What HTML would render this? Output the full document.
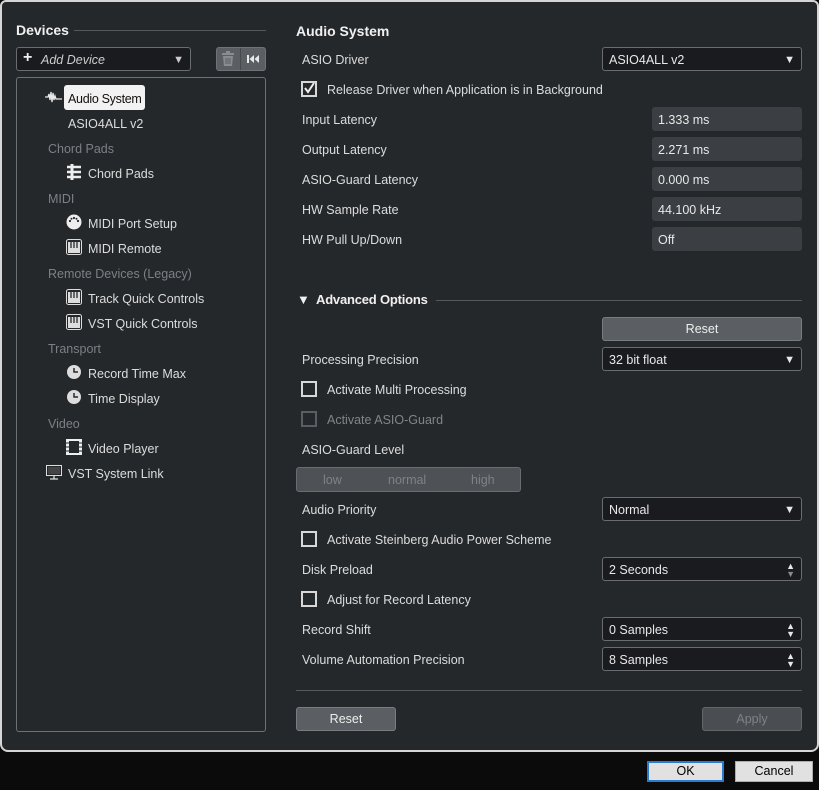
<!DOCTYPE html>
<html><head><meta charset="utf-8"><style>
*{box-sizing:border-box;margin:0;padding:0}
body{width:819px;height:790px;background:#0b0b0b;font-family:"Liberation Sans",sans-serif;font-size:12.5px;color:#dcdcdc;position:relative;overflow:hidden}
.abs{position:absolute}
#main{left:0;top:0;width:819px;height:752px;background:#25282b;border:2px solid #d6d6d6;border-radius:6px 6px 8px 8px}
.t{position:absolute;white-space:nowrap;line-height:16px;margin-top:1px}
.h{font-weight:bold;font-size:14px;color:#f0f0f0}
.dd{position:absolute;background:#1a1b1e;border:1px solid #6a6d70;border-radius:3px;height:24px;padding:4px 6px;line-height:16px;color:#e8e8e8}
.dd .ar{position:absolute;right:6px;top:4px;font-size:11px}
.fld{position:absolute;background:#3b3e42;border-radius:3px;height:24px;left:652px;width:150px;padding:5px 6px;line-height:16px;color:#e8e8e8}
.btn{position:absolute;background:#5b5e62;border:1px solid #7a7d80;border-radius:3px;height:24px;text-align:center;line-height:23px;color:#eee}
.cb{position:absolute;width:16px;height:16px;border:2px solid #d8d8d8;left:301px}
.grp{color:#7c8085}
</style></head><body>
<div id="main" class="abs"></div>

<div class="t h" style="left:16px;top:21px">Devices</div>
<div class="abs" style="left:74px;top:30px;width:192px;height:1px;background:#55585c"></div>
<div class="dd" style="left:16px;top:47px;width:175px;height:24px;color:#ccc"><b style="font-size:16px;color:#eee;position:absolute;left:6px;top:2px">+</b><i style="position:absolute;left:24px;top:4px">Add Device</i><span class="ar">▼</span></div>
<div class="abs" style="left:216px;top:47px;width:50px;height:24px;background:#5b5e62;border:1px solid #6f7276;border-radius:3px"></div>
<div class="abs" style="left:240px;top:48px;width:1px;height:22px;background:#46494d"></div>
<svg class="abs" style="left:221px;top:51px" width="14" height="16"><rect x="1" y="2" width="12" height="2" fill="#8a8d90"/><rect x="5" y="0" width="4" height="2" fill="#8a8d90"/><path d="M2 5h10l-1 10H3z" fill="#8a8d90"/><path d="M5 7v6M7 7v6M9 7v6" stroke="#5b5e62"/></svg>
<svg class="abs" style="left:247px;top:55px" width="13" height="8"><rect x="0" y="0" width="2" height="8" fill="#e8e8e8"/><path d="M7 0v8L2.5 4zM12 0v8L7.5 4z" fill="#e8e8e8"/></svg>

<div class="abs" style="left:16px;top:77px;width:250px;height:655px;border:1px solid #6e7175;border-radius:3px"></div>
<svg class="abs" style="left:45px;top:90px" width="18" height="14"><path d="M0 7h3l1-3 1 6 1-8 1 10 1-9 1 7 1-4 1 3h6" stroke="#e8e8e8" fill="none" stroke-width="1.3"/></svg>
<div class="abs" style="left:64px;top:85px;width:81px;height:25px;background:#f2f2f2;border-radius:3px"></div>
<div class="t" style="left:68px;top:90px;color:#111;letter-spacing:-0.3px">Audio System</div>
<div class="t" style="left:68px;top:115px">ASIO4ALL v2</div>
<div class="t grp" style="left:48px;top:140px">Chord Pads</div>
<svg class="abs" style="left:67px;top:164px" width="14" height="16"><path d="M0 3h14M0 8h14M0 13h14" stroke="#eee" stroke-width="2.5"/><path d="M5 0v16" stroke="#eee" stroke-width="3"/></svg>
<div class="t" style="left:88px;top:165px">Chord Pads</div>
<div class="t grp" style="left:48px;top:190px">MIDI</div>
<svg class="abs" style="left:66px;top:214px" width="16" height="16"><circle cx="8" cy="8" r="7.5" fill="#eee"/><circle cx="4" cy="7" r="1.1" fill="#25282b"/><circle cx="12" cy="7" r="1.1" fill="#25282b"/><circle cx="8" cy="4" r="1.1" fill="#25282b"/><circle cx="5.5" cy="4.8" r="1" fill="#25282b"/><circle cx="10.5" cy="4.8" r="1" fill="#25282b"/></svg>
<div class="t" style="left:88px;top:215px">MIDI Port Setup</div>
<svg class="abs" style="left:66px;top:239px" width="16" height="16"><rect x="0.5" y="0.5" width="15" height="15" rx="2" fill="none" stroke="#ddd"/><rect x="2" y="3" width="12" height="11" fill="#ddd"/><path d="M5 3v6M8 3v6M11 3v6" stroke="#25282b" stroke-width="1.3"/></svg>
<div class="t" style="left:88px;top:240px">MIDI Remote</div>
<div class="t grp" style="left:48px;top:265px">Remote Devices (Legacy)</div>
<svg class="abs" style="left:66px;top:289px" width="16" height="16"><rect x="0.5" y="0.5" width="15" height="15" rx="2" fill="none" stroke="#ddd"/><rect x="2" y="3" width="12" height="11" fill="#ddd"/><path d="M5 3v6M8 3v6M11 3v6" stroke="#25282b" stroke-width="1.3"/></svg>
<div class="t" style="left:88px;top:290px">Track Quick Controls</div>
<svg class="abs" style="left:66px;top:314px" width="16" height="16"><rect x="0.5" y="0.5" width="15" height="15" rx="2" fill="none" stroke="#ddd"/><rect x="2" y="3" width="12" height="11" fill="#ddd"/><path d="M5 3v6M8 3v6M11 3v6" stroke="#25282b" stroke-width="1.3"/></svg>
<div class="t" style="left:88px;top:315px">VST Quick Controls</div>
<div class="t grp" style="left:48px;top:340px">Transport</div>
<svg class="abs" style="left:67px;top:365px" width="14" height="14"><circle cx="7" cy="7" r="7" fill="#ddd"/><path d="M7 3v4h4" stroke="#25282b" stroke-width="1.5" fill="none"/></svg>
<div class="t" style="left:88px;top:365px">Record Time Max</div>
<svg class="abs" style="left:67px;top:390px" width="14" height="14"><circle cx="7" cy="7" r="7" fill="#ddd"/><path d="M7 3v4h4" stroke="#25282b" stroke-width="1.5" fill="none"/></svg>
<div class="t" style="left:88px;top:390px">Time Display</div>
<div class="t grp" style="left:48px;top:415px">Video</div>
<svg class="abs" style="left:66px;top:439px" width="16" height="16"><rect x="0" y="0" width="16" height="16" fill="#eee"/><rect x="3" y="2" width="10" height="12" fill="#25282b"/><path d="M0 4h3M0 8h3M0 12h3M13 4h3M13 8h3M13 12h3" stroke="#25282b"/></svg>
<div class="t" style="left:88px;top:440px">Video Player</div>
<svg class="abs" style="left:46px;top:465px" width="16" height="15"><rect x="0.5" y="0.5" width="15" height="10" fill="none" stroke="#ddd"/><rect x="2" y="2" width="12" height="7" fill="#444"/><path d="M8 11v3M4 14h8" stroke="#ddd" stroke-width="1.3"/></svg>
<div class="t" style="left:68px;top:465px">VST System Link</div>

<div class="t h" style="left:296px;top:22px">Audio System</div>
<div class="t" style="left:302px;top:51px">ASIO Driver</div>
<div class="dd" style="left:602px;top:47px;width:200px">ASIO4ALL v2<span class="ar">▼</span></div>
<div class="cb" style="top:81px"></div>
<svg class="abs" style="left:303px;top:82px" width="13" height="13"><path d="M2 6l3 4 6-9" stroke="#eee" stroke-width="2" fill="none"/></svg>
<div class="t" style="left:327px;top:81px">Release Driver when Application is in Background</div>
<div class="t" style="left:302px;top:111px">Input Latency</div><div class="fld" style="top:107px">1.333 ms</div>
<div class="t" style="left:302px;top:141px">Output Latency</div><div class="fld" style="top:137px">2.271 ms</div>
<div class="t" style="left:302px;top:171px">ASIO-Guard Latency</div><div class="fld" style="top:167px">0.000 ms</div>
<div class="t" style="left:302px;top:201px">HW Sample Rate</div><div class="fld" style="top:197px">44.100 kHz</div>
<div class="t" style="left:302px;top:231px">HW Pull Up/Down</div><div class="fld" style="top:227px">Off</div>

<div class="t h" style="left:297px;top:291px;font-size:13px;letter-spacing:-0.2px">▼&nbsp; Advanced Options</div>
<div class="abs" style="left:436px;top:300px;width:366px;height:1px;background:#55585c"></div>
<div class="btn" style="left:602px;top:317px;width:200px">Reset</div>
<div class="t" style="left:302px;top:351px">Processing Precision</div>
<div class="dd" style="left:602px;top:347px;width:200px">32 bit float<span class="ar">▼</span></div>
<div class="cb" style="top:381px"></div>
<div class="t" style="left:327px;top:381px">Activate Multi Processing</div>
<div class="cb" style="top:411px;border-color:#5a5d61"></div>
<div class="t" style="left:327px;top:411px;color:#808488">Activate ASIO-Guard</div>
<div class="t" style="left:302px;top:441px">ASIO-Guard Level</div>
<div class="abs" style="left:296px;top:467px;width:225px;height:25px;background:#4e5155;border:1px solid #6a6d70;border-radius:3px"></div>
<div class="t" style="left:323px;top:471px;color:#7f8286">low</div>
<div class="t" style="left:388px;top:471px;color:#7f8286">normal</div>
<div class="t" style="left:471px;top:471px;color:#7f8286">high</div>
<div class="t" style="left:302px;top:501px">Audio Priority</div>
<div class="dd" style="left:602px;top:497px;width:200px">Normal<span class="ar">▼</span></div>
<div class="cb" style="top:531px"></div>
<div class="t" style="left:327px;top:531px">Activate Steinberg Audio Power Scheme</div>
<div class="t" style="left:302px;top:561px">Disk Preload</div>
<div class="dd" style="left:602px;top:557px;width:200px">2 Seconds<span class="ar" style="font-size:9px;line-height:8px;top:4px">▲<br><span style="color:#888">▼</span></span></div>
<div class="cb" style="top:591px"></div>
<div class="t" style="left:327px;top:591px">Adjust for Record Latency</div>
<div class="t" style="left:302px;top:621px">Record Shift</div>
<div class="dd" style="left:602px;top:617px;width:200px">0 Samples<span class="ar" style="font-size:9px;line-height:8px;top:4px">▲<br>▼</span></div>
<div class="t" style="left:302px;top:651px">Volume Automation Precision</div>
<div class="dd" style="left:602px;top:647px;width:200px">8 Samples<span class="ar" style="font-size:9px;line-height:8px;top:4px">▲<br>▼</span></div>

<div class="abs" style="left:296px;top:690px;width:506px;height:1px;background:#55585c"></div>
<div class="btn" style="left:296px;top:707px;width:100px">Reset</div>
<div class="btn" style="left:702px;top:707px;width:100px;background:#4a4d51;border-color:#626569;color:#7f8286">Apply</div>

<div class="abs" style="left:647px;top:761px;width:77px;height:21px;background:#e1e1e1;border:2px solid #2a7ad0;text-align:center;line-height:17px;color:#000">OK</div>
<div class="abs" style="left:735px;top:761px;width:78px;height:21px;background:#e1e1e1;border:1px solid #adadad;text-align:center;line-height:19px;color:#000">Cancel</div>
</body></html>
